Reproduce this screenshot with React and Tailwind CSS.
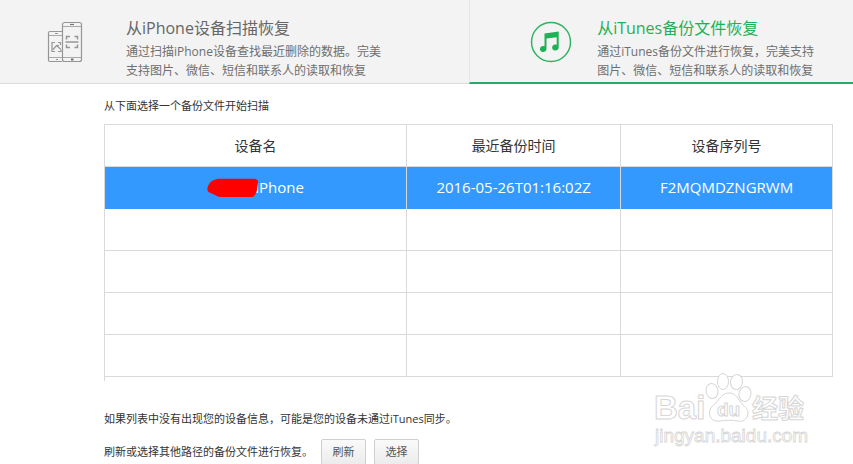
import React, { useState } from "react";

const backups = [
  { id: 1, name: "iPhone", date: "2016-05-26T01:16:02Z", serial: "F2MQMDZNGRWM" },
];

const EMPTY_ROWS = [1, 2, 3, 4];

const PhonesIcon = () => (
  <svg
    viewBox="0 0 36 42"
    className="w-9 h-[42px] shrink-0"
    fill="none"
    stroke="#969696"
    strokeWidth="1.2"
  >
    <path d="M15 10.500H3A1.500 1.500 0 0 0 1.500 12V39A1.500 1.500 0 0 0 3 40.500H15" />
    <path d="M1.500 14.500H15M1.500 36.500H15" strokeWidth="0.800" />
    <path d="M8 12.500H11M9 38.500H11" />
    <path d="M8 21.500H5V30.500H8M11 21.500H13.500V24M11 30.500H14V29M6 28.500L9.500 24.500L14 28.500M10 24.500h2" />
    <rect x="15.500" y="1.500" width="19" height="39" rx="2" />
    <path d="M15.500 5.500H34.500M15.500 36.500H34.500" strokeWidth="0.800" />
    <path d="M23 3.500H27" stroke="#777" />
    <path d="M24 38.500H26.500" stroke="#666" strokeWidth="1.800" />
    <path
      strokeWidth="1.500"
      d="M19.500 18.500V15.500H23M27.500 15.500H30.500V18.500M19.500 23.500V26.500H23M27.500 26.500H30.500V23.500M18.500 21H31.500"
    />
  </svg>
);

const MusicIcon = () => (
  <svg viewBox="0 0 42 42" className="w-[42px] h-[42px] shrink-0">
    <circle cx="21" cy="21" r="19.500" fill="none" stroke="#2bb35f" strokeWidth="1.400" />
    <path
      fill="#1fb155"
      d="M14.500 12.400L28.700 10.500V26.500a3.300 3 0 1 1-2-2.700V16.200L16.500 17.400V28a3.300 3 0 1 1-2-2.700Z"
    />
  </svg>
);

const RedMark = () => (
  <svg viewBox="0 0 52 20" className="w-[52px] h-5" fill="#fe0000">
    <path d="M11 0.700H47Q52 1 51 5L50 12Q48 19 45 19H14Q11 19 7 16.500L1.500 14Q-0.500 12 1 8Q3 2 11 0.700Z" />
  </svg>
);

const Watermark = () => (
  <svg
    viewBox="0 0 156 76"
    className="absolute bottom-4 right-11 w-[156px] h-[76px] pointer-events-none"
    fill="#ffffff"
    stroke="#d6d6d6"
    strokeWidth="1"
    fontFamily="'Liberation Sans', 'Noto Sans CJK SC', sans-serif"
  >
    <text x="1" y="46" fontSize="33" fontWeight="700">
      Bai
    </text>
    <ellipse cx="59" cy="18" rx="6" ry="7.500" transform="rotate(-12 59 18)" />
    <ellipse cx="70" cy="8.500" rx="5.500" ry="8" />
    <ellipse cx="83.500" cy="9" rx="6" ry="7.500" transform="rotate(12 83.500 9)" />
    <ellipse cx="92" cy="21" rx="6" ry="7.500" transform="rotate(12 92 21)" />
    <path d="M76 20c6 0 8 4 11.500 9s8 6 7.500 12c-1 6-6 8-10 7c-6-1-12-1-18 0c-6 1-10.500-2-10.500-8c0-6 4-7 8-12c4-4.500 6-8 11.500-8Z" />
    <text x="64" y="43" fontSize="19" fontWeight="700">
      du
    </text>
    <text x="99" y="45" fontSize="26" fontWeight="700">
      经验
    </text>
    <text x="2" y="69" fontSize="19" strokeWidth="0.800">
      jingyan.baidu.com
    </text>
  </svg>
);

const App = () => {
  const [mode, setMode] = useState("itunes");
  const [selected, setSelected] = useState(1);

  return (
    <div className="relative bg-white text-[#333] font-['Open_Sans','Noto_Sans_CJK_SC',sans-serif]">
      {/* Recovery modes */}
      <nav className="flex h-21 bg-[#f3f3f3]">
        <button
          onClick={() => setMode("device")}
          className={`flex w-[55%] items-start pl-[47px] pt-[18px] text-left border-b ${
            mode === "device" ? "border-[#2ba866]" : "border-[#dcdcdc]"
          }`}
        >
          <span className="flex pt-[3px]">
            <PhonesIcon />
          </span>
          <span className="ml-[43px]">
            <span className="block text-base leading-5 text-[#666]">从iPhone设备扫描恢复</span>
            <span className="block mt-1 text-xs leading-[19px] text-[#6e6e6e]">
              通过扫描iPhone设备查找最近删除的数据。完美
              <br />
              支持图片、微信、短信和联系人的读取和恢复
            </span>
          </span>
        </button>
        <button
          onClick={() => setMode("itunes")}
          className={`flex flex-1 items-start pl-[60px] pt-[18px] text-left border-l border-l-[#e6e6e6] border-b-2 ${
            mode === "itunes" ? "border-b-[#2ba866]" : "border-b-[#dcdcdc]"
          }`}
        >
          <span className="flex pt-[3px]">
            <MusicIcon />
          </span>
          <span className="ml-[25px]">
            <span className="block text-base leading-5 text-[#1fb155]">从iTunes备份文件恢复</span>
            <span className="block mt-1 text-xs leading-[19px] text-[#6e6e6e]">
              通过iTunes备份文件进行恢复，完美支持
              <br />
              图片、微信、短信和联系人的读取和恢复
            </span>
          </span>
        </button>
      </nav>

      {/* Backup list */}
      <main className="pl-[104px] pr-5 pt-3">
        <h2 className="text-[11px] leading-5">从下面选择一个备份文件开始扫描</h2>
        <div className="mt-2 pb-1 border-l border-[#d9d9d9]">
          <table className="w-full table-fixed border-separate border-spacing-0 text-sm text-center">
            <colgroup>
              <col className="w-[41.5%]" />
              <col className="w-[29.4%]" />
              <col />
            </colgroup>
            <thead>
              <tr className="h-[43px]">
                <th className="p-0 font-normal border-y border-r border-[#d9d9d9]">设备名</th>
                <th className="p-0 font-normal border-y border-r border-[#d9d9d9]">最近备份时间</th>
                <th className="p-0 font-normal border-y border-r border-[#d9d9d9]">设备序列号</th>
              </tr>
            </thead>
            <tbody className="text-[15px]">
              {backups.map((backup) => (
                <tr
                  key={backup.id}
                  onClick={() => setSelected(backup.id)}
                  className={
                    selected === backup.id ? "h-[42px] bg-[#3399ff] text-white" : "h-[42px]"
                  }
                >
                  <td className="p-0 border-r border-[#d9d9d9]">
                    <span className="flex items-center justify-center">
                      <span className="relative z-10 -mr-1">
                        <RedMark />
                      </span>
                      {backup.name}
                    </span>
                  </td>
                  <td className="p-0 border-r border-[#d9d9d9]">{backup.date}</td>
                  <td className="p-0 border-r border-[#d9d9d9]">{backup.serial}</td>
                </tr>
              ))}
              {EMPTY_ROWS.map((row) => (
                <tr key={row} className="h-[42px]">
                  <td className="p-0 border-b border-r border-[#d9d9d9]"></td>
                  <td className="p-0 border-b border-r border-[#d9d9d9]"></td>
                  <td className="p-0 border-b border-r border-[#d9d9d9]"></td>
                </tr>
              ))}
            </tbody>
          </table>
        </div>

        <p className="mt-7 text-[11px] leading-5">
          如果列表中没有出现您的设备信息，可能是您的设备未通过iTunes同步。
        </p>
        <div className="mt-[10px] flex items-center">
          <p className="w-[217px] text-[11px] leading-5">刷新或选择其他路径的备份文件进行恢复。</p>
          <button className="w-[45px] h-[26px] text-[11px] text-[#555] rounded-xs border border-[#cfcfcf] bg-linear-to-b from-[#fafafa] to-[#ececec]">
            刷新
          </button>
          <button className="ml-2 w-[45px] h-[26px] text-[11px] text-[#555] rounded-xs border border-[#cfcfcf] bg-linear-to-b from-[#fafafa] to-[#ececec]">
            选择
          </button>
        </div>
      </main>

      <Watermark />
    </div>
  );
};

export default App;
